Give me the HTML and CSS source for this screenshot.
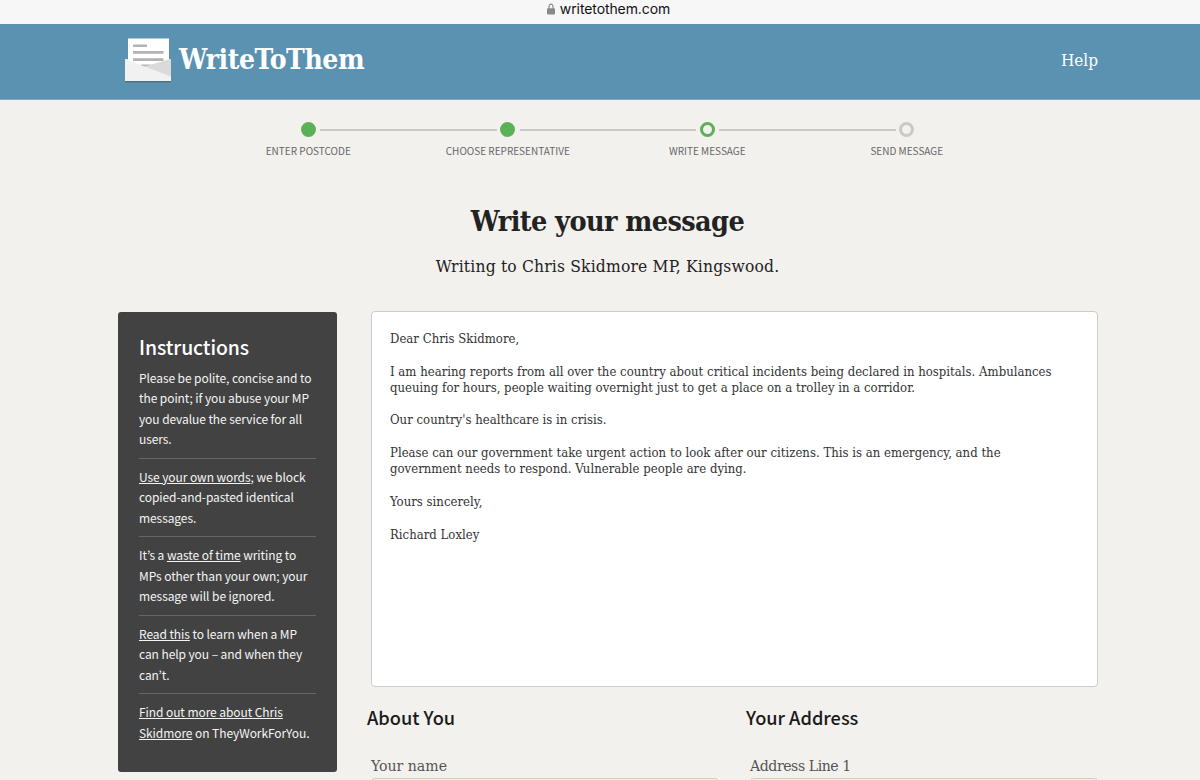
FILE: index.html
```html
<!DOCTYPE html>
<html lang="en">
<head>
    <title>WriteToThem</title>
    <meta charset="UTF-8">
    <meta name="viewport" content="width=device-width, initial-scale=1.0">
    <link rel="stylesheet" href="styles.css">
</head>
<body>
    <div class="address-bar">
        <svg class="lock" width="8" height="12" viewBox="0 0 8 12">
            <path d="M2 6V3.400a2 2.200 0 0 1 4 0V6" fill="none" stroke="#8a8a8a" stroke-width="1.200"/>
            <rect x="0" y="5.300" width="8" height="6.200" rx="1" fill="#8a8a8a"/>
        </svg>
        <span>writetothem.com</span>
    </div>

    <header class="site-header">
        <a class="logo" href="#">
            <svg width="48" height="46" viewBox="0 0 48 46">
                <rect x="1" y="43" width="46" height="1.500" fill="#4b7388"/>
                <path d="M1 21h46v22H1z" fill="#dcdcdc"/>
                <path d="M4 0.500h41V21.500L28 30H18L4 24z" fill="#fff"/>
                <path d="M9 7.800h14M9 14.400h30.500M9 21.600h30.500M17 27.700h10" stroke="#b3b3b3" stroke-width="2.600"/>
                <path d="M47 21v18L20 28.500z" fill="#dadada"/>
                <path d="M1 21l46 17.500V43H1z" fill="#f1f1f1"/>
            </svg>
            <span>WriteToThem</span>
        </a>
        <a class="help" href="#">Help</a>
    </header>

    <ol class="progress">
        <li class="done"><i></i><span>Enter postcode</span></li>
        <li class="done"><i></i><span>Choose representative</span></li>
        <li class="current"><i></i><span>Write message</span></li>
        <li><i></i><span>Send message</span></li>
    </ol>

    <h1>Write your message</h1>
    <p class="lead">Writing to Chris Skidmore MP, Kingswood.</p>

    <div class="columns">
        <aside class="instructions">
            <h2>Instructions</h2>
            <ul>
                <li>Please be polite, concise and to<br>the point; if you abuse your MP<br>you devalue the service for all<br>users.</li>
                <li><a href="#">Use your own words</a>; we block<br>copied-and-pasted identical<br>messages.</li>
                <li>It’s a <a href="#">waste of time</a> writing to<br>MPs other than your own; your<br>message will be ignored.</li>
                <li><a href="#">Read this</a> to learn when a MP<br>can help you – and when they<br>can’t.</li>
                <li><a href="#">Find out more about Chris<br>Skidmore</a> on TheyWorkForYou.</li>
            </ul>
        </aside>

        <form class="compose">
            <textarea class="message" spellcheck="false">Dear Chris Skidmore,

I am hearing reports from all over the country about critical incidents being declared in hospitals. Ambulances
queuing for hours, people waiting overnight just to get a place on a trolley in a corridor.

Our country's healthcare is in crisis.

Please can our government take urgent action to look after our citizens. This is an emergency, and the
government needs to respond. Vulnerable people are dying.

Yours sincerely,

Richard Loxley</textarea>
            <div class="details">
                <section>
                    <h3>About You</h3>
                    <label for="name">Your name</label>
                    <input id="name" type="text">
                </section>
                <section>
                    <h3>Your Address</h3>
                    <label class="tight" for="address1">Address Line 1</label>
                    <input id="address1" type="text">
                </section>
            </div>
        </form>
    </div>
</body>
</html>
```
FILE: styles.css
```css
* {
    box-sizing: border-box;
}
body {
    margin: 0;
    height: 780px;
    overflow: hidden;
    background-color: #f3f1ee;
    color: #222;
    font-family: 'DejaVu Serif Condensed', 'DejaVu Serif', serif;
    font-stretch: condensed;
}
.address-bar {
    height: 24px;
    padding: 0 0 6px 17px;
    display: flex;
    justify-content: center;
    align-items: center;
    gap: 5px;
    background-color: #f7f7f7;
    color: #111;
    font: 14px/18px Inter, 'Liberation Sans', sans-serif;
    letter-spacing: -0.1px;
}
.site-header {
    height: 76px;
    padding: 0 102px 0 124px;
    display: flex;
    justify-content: space-between;
    background-color: #5b92b1;
    border-bottom: 1px solid #7fa8c0;
}
.site-header a {
    color: #fff;
    text-decoration: none;
}
.logo {
    display: flex;
    gap: 7px;
    padding-top: 14px;
    font-size: 28px;
    font-weight: bold;
    line-height: 43px;
    letter-spacing: -0.4px;
}
.help {
    font-size: 17px;
    line-height: 72px;
}
.progress {
    list-style: none;
    margin: 22px 0 0 208.5px;
    padding: 0;
    width: 798px;
    display: flex;
}
.progress li {
    position: relative;
    flex: 1;
    display: flex;
    flex-direction: column;
    align-items: center;
    gap: 6px;
    color: #666;
    font: 10px/16px 'Noto Sans CJK KR', sans-serif;
    text-transform: uppercase;
    white-space: nowrap;
}
.progress i {
    width: 15px;
    height: 15px;
    border: 3px solid #c9c9c7;
    border-radius: 50%;
}
.progress .done i {
    background-color: #5cb157;
    border-color: #5cb157;
}
.progress .current i {
    border-color: #5cb157;
}
/* line joining each step to the next one */
.progress li:not(:last-child)::after {
    content: '';
    position: absolute;
    top: 7px;
    left: calc(50% + 12px);
    width: calc(100% - 23px);
    height: 2px;
    background-color: #c9cac5;
}
h1 {
    margin: 40px 0 0 15px;
    text-align: center;
    font-size: 28.5px;
    line-height: 45px;
    letter-spacing: -0.6px;
}
.lead {
    margin: 10px 0 0 15px;
    text-align: center;
    font-size: 17.3px;
    line-height: 24px;
    letter-spacing: 0.18px;
}
.columns {
    margin: 33px 102px 0 118px;
    display: flex;
    align-items: flex-start;
    gap: 34px;
}
.instructions {
    width: 219px;
    height: 460px;
    margin-top: 1px;
    padding: 21px 21px 0;
    background-color: #424242;
    border-radius: 3px;
    color: #f4f4f4;
    font: 12px/20.4px 'Noto Sans CJK KR', sans-serif;
    letter-spacing: -0.08px;
    white-space: nowrap;
}
.instructions h2 {
    margin: 0;
    color: #fff;
    font-size: 19.4px;
    font-weight: 500;
    line-height: 28px;
}
.instructions ul {
    list-style: none;
    margin: 7px 0 0;
    padding: 0;
}
.instructions li {
    padding-bottom: 8px;
}
.instructions li + li {
    padding-top: 8.3px;
    border-top: 1px solid #666;
}
.instructions a {
    color: inherit;
}
.compose {
    flex: 1;
}
.message {
    display: block;
    width: 100%;
    height: 376px;
    margin: 0;
    padding: 19px 18px;
    background-color: #fff;
    border: 1px solid #ccc;
    border-radius: 4px;
    resize: none;
    overflow: hidden;
    white-space: pre;
    color: #333;
    font: 13px/16.3px 'DejaVu Serif Condensed', 'DejaVu Serif', serif;
    font-stretch: condensed;
    letter-spacing: 0.02px;
}
.details {
    display: grid;
    grid-template-columns: 348px 348px;
    gap: 31px;
}
.details h3 {
    margin: 16px 0 0 -4px;
    color: #1a1a1a;
    font: 500 18.2px/28px 'Noto Sans CJK KR', sans-serif;
}
.details label {
    display: block;
    margin-top: 24px;
    color: #555;
    font-size: 15.7px;
    line-height: 22px;
}
.details .tight {
    letter-spacing: -0.45px;
}
.details input {
    display: block;
    width: 100%;
    height: 38px;
    margin-top: 1px;
    background-color: #f1f1e4;
    border: 1px solid #cfd3ad;
    border-radius: 4px;
}
```
